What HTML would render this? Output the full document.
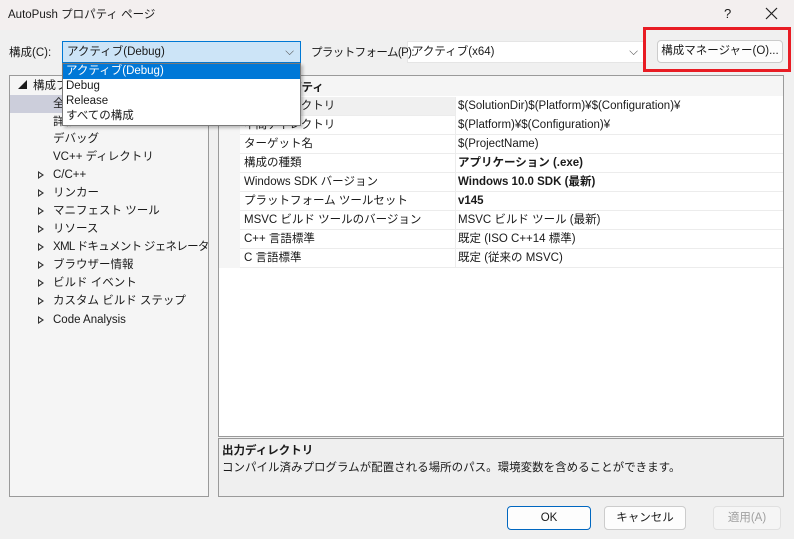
<!DOCTYPE html>
<html><head><meta charset="utf-8"><style>
*{box-sizing:border-box;margin:0;padding:0}
body{width:794px;height:539px;background:#f0f0f0;font-family:"Segoe UI","Liberation Sans","Noto Sans CJK JP",sans-serif;font-size:11.5px;color:#1a1a1a;position:relative;overflow:hidden}
.a{position:absolute;white-space:nowrap}
.row{position:absolute;left:240px;width:543px;height:19px;border-bottom:1px solid #ececec;line-height:19px}
.row .n{position:absolute;left:4px}
.row .v{position:absolute;left:215px;border-left:1px solid #ececec;padding-left:2px;height:19px;width:328px}
.tri{position:absolute;left:38px;width:0;height:0;border-left:6px solid #333;border-top:4px solid transparent;border-bottom:4px solid transparent}
.tri:after{content:"";position:absolute;left:-5px;top:-2px;border-left:3px solid #f5f5f5;border-top:2px solid transparent;border-bottom:2px solid transparent}
.ti{position:absolute;left:53px;line-height:19px;white-space:nowrap}
.btn{position:absolute;height:24px;border:1px solid #ccc;border-radius:4px;background:#fdfdfd;text-align:center;line-height:22px}
</style></head><body>
<div class="a" style="left:0;top:0;width:794px;height:30px;background:#f3efef"></div>
<div class="a" style="left:8px;top:6px">AutoPush プロパティ ページ</div>
<div class="a" style="left:724px;top:6px;font-size:13px">?</div>
<svg class="a" style="left:765px;top:7px" width="13" height="13"><path d="M1 1L12 12M12 1L1 12" stroke="#222" stroke-width="1.2"/></svg>

<div class="a" style="left:9px;top:44px">構成(C):</div>
<div class="a" style="left:62px;top:41px;width:239px;height:22px;background:#cce4f7;border:1px solid #0078d4;padding-left:4px;line-height:20px">アクティブ(Debug)<span style="position:absolute;right:6px;top:0;color:#555">⌵</span></div>

<div class="a" style="left:407px;top:41px;width:238px;height:22px;background:#fff;border:1px solid #e5e5e5;padding-left:4px;line-height:20px">アクティブ(x64)<span style="position:absolute;right:6px;top:0;color:#555">⌵</span></div>
<div class="a" style="left:311px;top:44px;letter-spacing:-0.6px">プラットフォーム(P):</div>
<div class="btn" style="left:657px;top:40px;width:126px;height:23px;line-height:21px">構成マネージャー(O)...</div>
<div class="a" style="left:643px;top:27px;width:148px;height:45px;border:3px solid #e81c24"></div>

<!-- tree -->
<div class="a" style="left:9px;top:75px;width:200px;height:422px;background:#f5f5f5;border:1px solid #9a9a9a;overflow:hidden">
<div class="a" style="left:0;top:19px;width:198px;height:18px;background:#cccedb"></div>
<div class="a" style="left:8px;top:2px;font-size:9px">◢</div>
<div class="a" style="left:23px;top:1px;line-height:19px">構成プロパティ</div>
<div style="position:absolute;left:-10px;top:-76px;width:220px;height:500px">
<div class="ti" style="top:95px">全般</div>
<div class="ti" style="top:113px">詳細</div>
<div class="ti" style="top:130px">デバッグ</div>
<div class="ti" style="top:148px">VC++ ディレクトリ</div>
<div class="tri" style="top:171px"></div><div class="ti" style="top:166px">C/C++</div>
<div class="tri" style="top:189px"></div><div class="ti" style="top:184px">リンカー</div>
<div class="tri" style="top:207px"></div><div class="ti" style="top:202px">マニフェスト ツール</div>
<div class="tri" style="top:225px"></div><div class="ti" style="top:220px">リソース</div>
<div class="tri" style="top:243px"></div><div class="ti" style="top:238px;letter-spacing:-0.7px">XML ドキュメント ジェネレーター</div>
<div class="tri" style="top:261px"></div><div class="ti" style="top:256px">ブラウザー情報</div>
<div class="tri" style="top:279px"></div><div class="ti" style="top:274px">ビルド イベント</div>
<div class="tri" style="top:297px"></div><div class="ti" style="top:292px">カスタム ビルド ステップ</div>
<div class="tri" style="top:316px"></div><div class="ti" style="top:311px">Code Analysis</div>
</div>
</div>

<!-- grid -->
<div class="a" style="left:218px;top:75px;width:566px;height:362px;background:#fff;border:1px solid #9a9a9a"></div>
<div class="a" style="left:219px;top:76px;width:564px;height:20px;background:#f5f5f5"></div>
<div class="a" style="left:219px;top:76px;width:21px;height:192px;background:#f5f5f5"></div>
<div class="a" style="left:244px;top:79px;font-weight:bold">全般プロパティ</div>
<div class="row" style="top:97px;background:#f0f0f0"><span class="n">出力ディレクトリ</span><span class="v" style="background:#fff">$(SolutionDir)$(Platform)¥$(Configuration)¥</span></div>
<div class="row" style="top:116px"><span class="n">中間ディレクトリ</span><span class="v">$(Platform)¥$(Configuration)¥</span></div>
<div class="row" style="top:135px"><span class="n">ターゲット名</span><span class="v">$(ProjectName)</span></div>
<div class="row" style="top:154px"><span class="n">構成の種類</span><span class="v" style="font-weight:bold">アプリケーション (.exe)</span></div>
<div class="row" style="top:173px"><span class="n">Windows SDK バージョン</span><span class="v" style="font-weight:bold">Windows 10.0 SDK (最新)</span></div>
<div class="row" style="top:192px"><span class="n">プラットフォーム ツールセット</span><span class="v" style="font-weight:bold">v145</span></div>
<div class="row" style="top:211px"><span class="n">MSVC ビルド ツールのバージョン</span><span class="v">MSVC ビルド ツール (最新)</span></div>
<div class="row" style="top:230px"><span class="n">C++ 言語標準</span><span class="v">既定 (ISO C++14 標準)</span></div>
<div class="row" style="top:249px"><span class="n">C 言語標準</span><span class="v">既定 (従来の MSVC)</span></div>

<!-- dropdown list -->
<div class="a" style="left:62px;top:63px;width:239px;height:63px;background:#fff;border:1px solid #7a7a7a;box-shadow:2px 2px 3px rgba(0,0,0,.25);line-height:15px">
<div style="background:#0078d7;color:#fff;padding-left:3px;height:15px">アクティブ(Debug)</div>
<div style="padding-left:3px">Debug</div>
<div style="padding-left:3px">Release</div>
<div style="padding-left:3px">すべての構成</div>
</div>

<!-- description -->
<div class="a" style="left:218px;top:438px;width:566px;height:59px;background:#efefef;border:1px solid #9a9a9a"></div>
<div class="a" style="left:222px;top:442px;font-weight:bold">出力ディレクトリ</div>
<div class="a" style="left:222px;top:459px">コンパイル済みプログラムが配置される場所のパス。環境変数を含めることができます。</div>

<div class="btn" style="left:507px;top:506px;width:84px;border:1px solid #0067c0">OK</div>
<div class="btn" style="left:604px;top:506px;width:82px">キャンセル</div>
<div class="btn" style="left:713px;top:506px;width:68px;color:#a0a0a0;background:#f5f5f5;border-color:#e0e0e0">適用(A)</div>
</body></html>
